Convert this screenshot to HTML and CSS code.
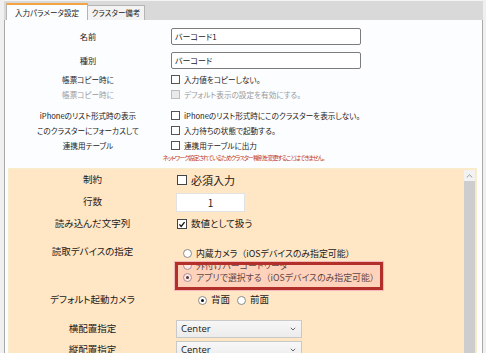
FILE: index.html
```html
<!DOCTYPE html>
<html lang="ja">
<head>
<meta charset="utf-8">
<link rel="stylesheet" href="styles.css">
</head>
<body>
<div class="app">
  <div class="tabs">
    <div class="tab active">入力パラメータ設定</div>
    <div class="tab">クラスター備考</div>
  </div>
  <div class="panel">
    <div class="upper">
      <div class="u-row u-input">
        <div class="u-lbl">名前</div>
        <div class="textbox">バーコード1</div>
      </div>
      <div class="u-row u-input">
        <div class="u-lbl">種別</div>
        <div class="textbox">バーコード</div>
      </div>
      <div class="u-row u-check">
        <div class="u-lbl">帳票コピー時に</div>
        <span class="cb"></span><span class="u-txt">入力値をコピーしない。</span>
      </div>
      <div class="u-row u-check disabled">
        <div class="u-lbl">帳票コピー時に</div>
        <span class="cb"></span><span class="u-txt">デフォルト表示の設定を有効にする。</span>
      </div>
      <div class="u-row u-check gap">
        <div class="u-lbl">iPhoneのリスト形式時の表示</div>
        <span class="cb"></span><span class="u-txt">iPhoneのリスト形式時にこのクラスターを表示しない。</span>
      </div>
      <div class="u-row u-check">
        <div class="u-lbl">このクラスターにフォーカスして</div>
        <span class="cb"></span><span class="u-txt">入力待ちの状態で起動する。</span>
      </div>
      <div class="u-row u-check">
        <div class="u-lbl">連携用テーブル</div>
        <span class="cb"></span><span class="u-txt">連携用テーブルに出力</span>
      </div>
      <div class="note">ネットワーク設定されているためクラスター種別を変更することはできません。</div>
    </div>
    <div class="lower">
      <div class="l-content">
        <div class="l-row">
          <div class="l-lbl">制約</div>
          <span class="cb big"></span><span class="l-txt big-txt">必須入力</span>
        </div>
        <div class="l-row">
          <div class="l-lbl">行数</div>
          <div class="numbox">1</div>
        </div>
        <div class="l-row">
          <div class="l-lbl">読み込んだ文字列</div>
          <span class="cb big checked"><svg viewBox="0 0 9 9" width="9" height="9"><polyline points="1.6,4.4 3.6,6.6 7.4,1.8" fill="none" stroke="#111" stroke-width="1.5"/></svg></span><span class="l-txt">数値として扱う</span>
        </div>
        <div class="l-row device">
          <div class="l-lbl dev-lbl">読取デバイスの指定</div>
          <div class="radios">
            <div class="radio-line"><span class="rb"></span><span class="r-txt">内蔵カメラ<span class="par">（</span>iOSデバイスのみ指定可能<span class="par">）</span></span></div>
            <div class="radio-line"><span class="rb"></span><span class="r-txt">外付けバーコードリーダ</span></div>
            <div class="radio-line"><span class="rb on"></span><span class="r-txt">アプリで選択する<span class="par">（</span>iOSデバイスのみ指定可能<span class="par">）</span></span></div>
            <div class="highlight"></div>
          </div>
        </div>
        <div class="l-row cam">
          <div class="l-lbl">デフォルト起動カメラ</div>
          <div class="cam-opts">
            <span class="rb on"></span><span class="l-txt">背面</span>
            <span class="rb second"></span><span class="l-txt">前面</span>
          </div>
        </div>
        <div class="l-row sel-row first-sel">
          <div class="l-lbl">横配置指定</div>
          <div class="select"><span>Center</span><svg class="chev" viewBox="0 0 6 4" width="6" height="4"><polyline points="0.8,0.8 3,3 5.2,0.8" fill="none" stroke="#666" stroke-width="1"/></svg></div>
        </div>
        <div class="l-row sel-row">
          <div class="l-lbl">縦配置指定</div>
          <div class="select"><span>Center</span><svg class="chev" viewBox="0 0 6 4" width="6" height="4"><polyline points="0.8,0.8 3,3 5.2,0.8" fill="none" stroke="#666" stroke-width="1"/></svg></div>
        </div>
      </div>
      <div class="scrollbar">
        <div class="sb-up"><svg viewBox="0 0 7 4" width="7" height="4"><polyline points="0.8,3.4 3.5,0.8 6.2,3.4" fill="none" stroke="#9a9a9a" stroke-width="1"/></svg></div>
        <div class="sb-thumb"></div>
      </div>
    </div>
  </div>
</div>
</body>
</html>
```
FILE: styles.css
```css
* { box-sizing: border-box; }
body {
  margin: 0;
  background: #f0f0f0;
  font-family: "Noto Sans CJK JP", "Noto Sans", sans-serif;
  font-feature-settings: "palt" 1;
  color: #1a1a1a;
}
.app {
  width: 486px;
  height: 353px;
  overflow: hidden;
}
.tabs {
  height: 20px;
  margin: 0 3px 0 4px;
  background: #d9d9d9;
  border-top: 1px solid #f4f4f4;
  display: flex;
  align-items: flex-end;
  padding-left: 2px;
}
.tab {
  font-size: 7.5px;
  line-height: 1;
  white-space: nowrap;
  display: flex;
  align-items: center;
  justify-content: center;
  border: 1px solid #b4b4b4;
  border-bottom: none;
}
.tab.active {
  width: 82px;
  height: 17px;
  background: #fcfdff;
  border-top: 2px solid #f2a445;
}
.tab:not(.active) {
  width: 57px;
  height: 15px;
  background: #f3f3f3;
  border-left: none;
}
.panel {
  height: 333px;
  margin: 0 3px 0 4px;
  background: #fcfdff;
  border-left: 1px solid #a9a9a9;
  border-right: 1px solid #a9a9a9;
  display: flex;
  flex-direction: column;
}
.upper {
  padding-top: 4px;
  font-size: 7.6px;
}
.u-row {
  display: flex;
  align-items: center;
}
.u-input { height: 24px; }
.u-check { height: 15px; }
.u-check.gap { margin-top: 6px; }
.u-lbl {
  width: 166px;
  text-align: center;
  line-height: 1;
}
.u-input .u-lbl { font-size: 8.2px; }
.textbox {
  width: 190px;
  height: 17px;
  border: 1px solid #7c7c7c;
  border-radius: 2px;
  background: #fff;
  padding-left: 3px;
  line-height: 15px;
  font-size: 8px;
}
.cb {
  width: 9px;
  height: 9px;
  border: 1px solid #555;
  background: #fff;
  margin-right: 4px;
  flex: none;
  display: inline-flex;
}
.cb.big {
  width: 10px;
  height: 10px;
  border-color: #444;
  margin-left: 1px;
}
.u-txt { line-height: 1; }
.disabled { color: #9a9a9a; }
.disabled .cb { border-color: #bdbdbd; background: #eaeaea; }
.note {
  height: 10px;
  text-align: center;
  font-size: 6px;
  letter-spacing: -1px;
  line-height: 10px;
  color: #c0392b;
}
.lower {
  margin: 5px 5px 0 3px;
  flex: 1;
  background: #ffe6c5;
  border: 1px solid #f7eccb;
  border-bottom: none;
  display: flex;
}
.l-content {
  flex: 1;
  font-size: 9.5px;
}
.l-row {
  display: flex;
  align-items: center;
  height: 22px;
}
.l-lbl {
  width: 167px;
  text-align: center;
  line-height: 1;
  flex: none;
}
.l-txt { line-height: 1; }
.big-txt { font-size: 11px; }
.numbox {
  width: 69px;
  height: 19px;
  background: #fff;
  border: 1px solid #e2e2e2;
  text-align: center;
  line-height: 17px;
  font-size: 10px;
}
.device {
  height: auto;
  align-items: flex-start;
  padding-top: 12px;
}
.dev-lbl { margin-top: -2px; line-height: 12px; }
.radios {
  position: relative;
  margin-left: 7px;
}
.radio-line {
  height: 12px;
  display: flex;
  align-items: center;
}
.r-txt {
  font-size: 8.9px;
  line-height: 11px;
  white-space: nowrap;
}
.par { font-feature-settings: normal; }
.rb {
  width: 9px;
  height: 9px;
  border-radius: 50%;
  border: 1px solid #8a8a8a;
  background: #fff;
  margin-right: 4px;
  flex: none;
  position: relative;
}
.rb.on::after {
  content: "";
  position: absolute;
  left: 2px;
  top: 2px;
  width: 3px;
  height: 3px;
  border-radius: 50%;
  background: #111;
}
.highlight {
  position: absolute;
  left: -8px;
  top: 15px;
  width: 208px;
  height: 28px;
  border: 3px solid #b3302a;
  background: rgba(255, 160, 160, 0.28);
  box-shadow: 0 0 0 1px #f4b8b8;
}
.cam { margin-top: 6px; }
.cam-opts {
  display: flex;
  align-items: center;
  margin-left: 22px;
}
.rb.second { margin-left: 7px; }
.sel-row { height: 21px; }
.first-sel { margin-top: 7px; }
.select {
  width: 126px;
  height: 18px;
  border: 1px solid #c9c9c9;
  background: linear-gradient(#f7f7f7, #ececec);
  display: flex;
  align-items: center;
  justify-content: space-between;
  padding: 0 5px 0 4px;
  font-family: "Open Sans", "Liberation Sans", sans-serif;
  font-size: 9.5px;
}
.scrollbar {
  width: 11px;
  margin: 1px 1px 0 0;
  display: flex;
  flex-direction: column;
}
.sb-up {
  height: 11px;
  background: #f2f2f2;
  display: flex;
  align-items: center;
  justify-content: center;
}
.sb-thumb {
  flex: 1;
  background: #cdcdcd;
}
```
